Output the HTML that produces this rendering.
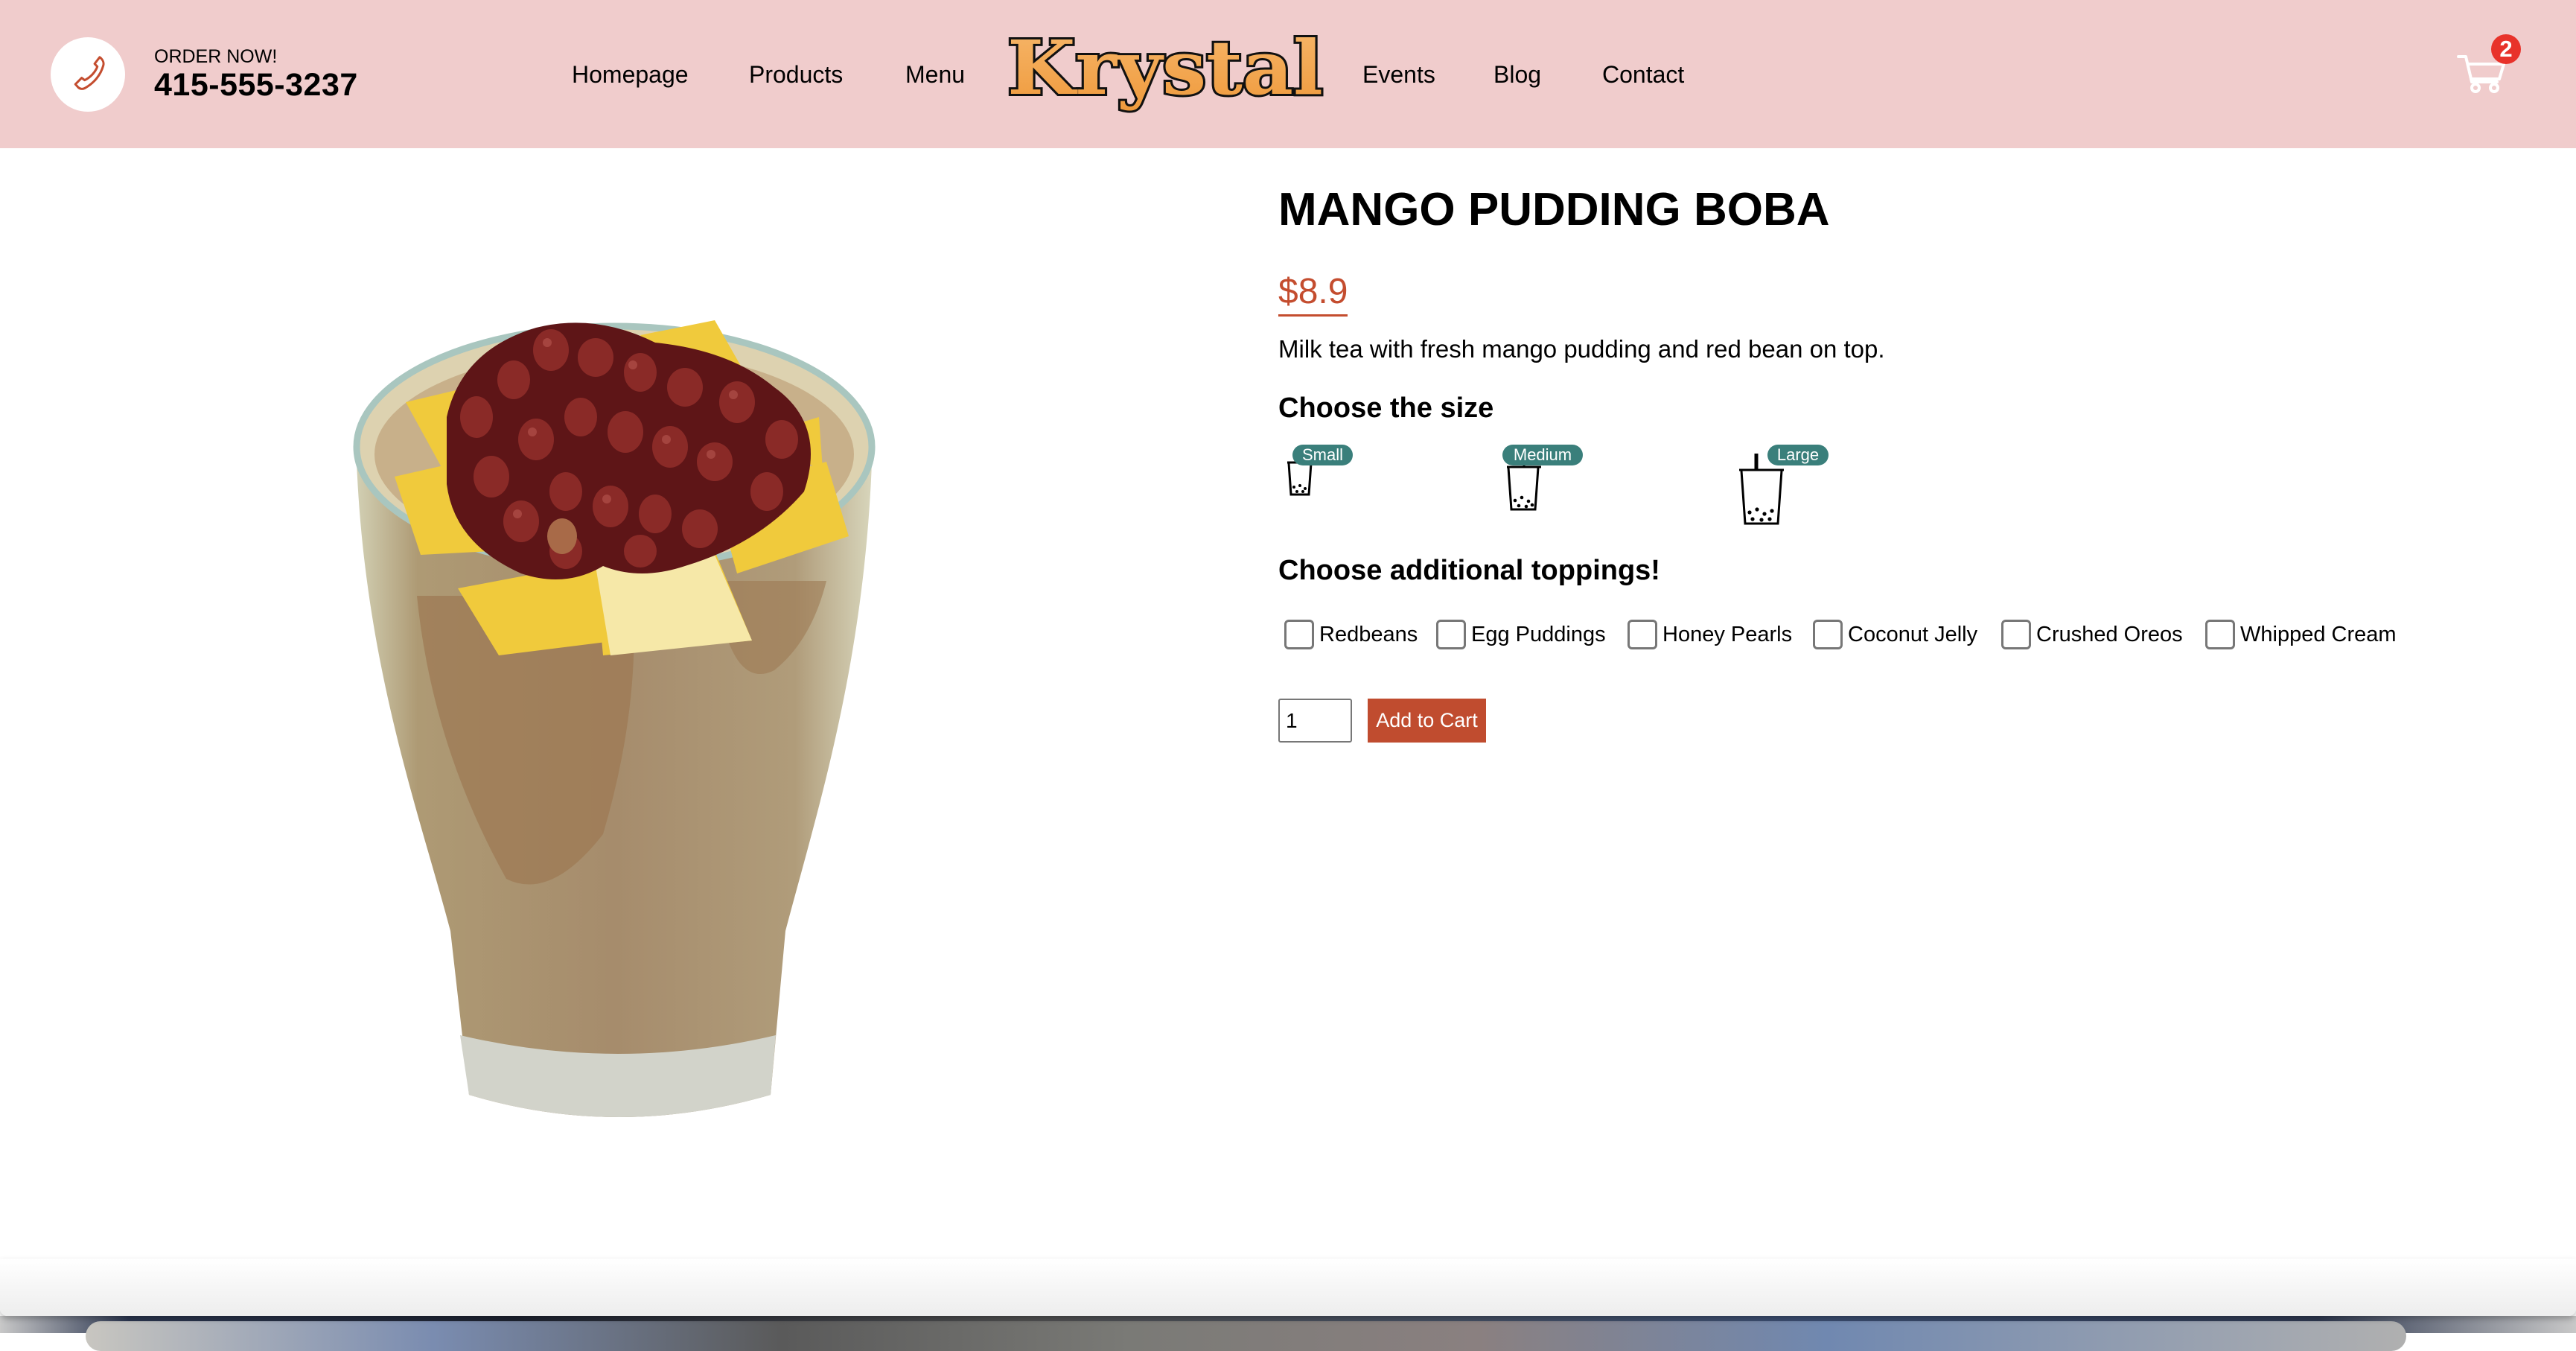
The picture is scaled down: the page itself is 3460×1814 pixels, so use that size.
<!DOCTYPE html>
<html><head><meta charset="utf-8">
<style>
*{margin:0;padding:0;box-sizing:border-box}
html,body{width:3460px;height:1790px;overflow:hidden;background:#fff;font-family:"Liberation Sans",Arial,sans-serif;color:#000}
.abs{position:absolute}
header{position:absolute;left:0;top:0;width:3460px;height:199px;background:#f0cccc}
.nav{position:absolute;top:80px;font-size:32px;line-height:40px}
.tp{position:absolute;top:832px;height:40px;display:flex;align-items:center}
.cb{width:40px;height:40px;border:3px solid #777;border-radius:6px;background:#fff;margin-right:7px}
.tp span{font-size:29px}
.pill{position:absolute;top:597px;height:28px;background:#3a7f7b;color:#fff;border-radius:14px;font-size:22px;line-height:28px;text-align:center}
</style></head><body>
<header>
<div class="abs" style="left:68px;top:50px;width:100px;height:100px;border-radius:50%;background:#fff"></div>
<svg class="abs" style="left:85px;top:68px" width="66" height="66" viewBox="0 0 24 24"><path d="M16.5 2.5l-2 3.5 1.5 1.2c-.6 2.8-2.6 5.7-5.2 7.4l-1.6-.9-2.6 3.5 1.4 1.2c1 .9 2.4.8 3.5 0 4-3 6.7-7.4 7.3-12.1.2-1.3-.5-2.6-1.6-3.4z" fill="none" stroke="#c44d2f" stroke-width="1.1" stroke-linejoin="round" transform="rotate(8 12 12)"/></svg>
<div class="abs" style="left:207px;top:62px;font-size:25px;line-height:28px">ORDER NOW!</div>
<div class="abs" style="left:207px;top:91px;font-size:43px;font-weight:bold;line-height:46px;letter-spacing:0.5px">415-555-3237</div>
<div class="nav" style="left:768px">Homepage</div>
<div class="nav" style="left:1006px">Products</div>
<div class="nav" style="left:1216px">Menu</div>
<div class="nav" style="left:1830px">Events</div>
<div class="nav" style="left:2006px">Blog</div>
<div class="nav" style="left:2152px">Contact</div>
<svg class="abs" style="left:1345px;top:30px" width="440" height="135" viewBox="0 0 440 135">
<defs><linearGradient id="lg" x1="0" y1="0" x2="0" y2="1"><stop offset="0" stop-color="#f6b66a"/><stop offset="1" stop-color="#ef9a3c"/></linearGradient></defs>
<text x="8" y="96" font-family="DejaVu Serif,serif" font-weight="bold" font-size="100" fill="url(#lg)" stroke="#111" stroke-width="6" paint-order="stroke" textLength="424" lengthAdjust="spacingAndGlyphs">Krystal</text>
</svg>
<svg class="abs" style="left:3300px;top:64px" width="70" height="62" viewBox="0 0 70 62"><path d="M2 12h10l8 34h34M15 22h48l-6 20H19" fill="none" stroke="#fff" stroke-width="4" stroke-linecap="round" stroke-linejoin="round"/><circle cx="25" cy="54" r="5" fill="none" stroke="#fff" stroke-width="4"/><circle cx="50" cy="54" r="5" fill="none" stroke="#fff" stroke-width="4"/></svg>
<div class="abs" style="left:3346px;top:46px;width:40px;height:40px;border-radius:50%;background:#e8322a;color:#fff;font-weight:bold;font-size:31px;line-height:40px;text-align:center">2</div>
</header>

<svg class="abs" style="left:0;top:199px" width="1400" height="1400" viewBox="0 199 1400 1400">
<defs>
<linearGradient id="body" x1="0" x2="1"><stop offset="0" stop-color="#d2d0b4"/><stop offset=".12" stop-color="#ae9a74"/><stop offset=".5" stop-color="#a68c6c"/><stop offset=".85" stop-color="#b09c7a"/><stop offset="1" stop-color="#d8d6bc"/></linearGradient>
</defs>
<path d="M478 590 C485 880 560 1080 605 1250 L630 1470 Q830 1530 1035 1470 L1055 1250 C1100 1080 1165 880 1172 590 Z" fill="url(#body)"/>
<path d="M560 800 Q580 1000 680 1180 Q740 1210 810 1120 Q860 950 850 800 Z" fill="#9d7a54" opacity=".75"/>
<path d="M960 780 Q980 930 1040 900 Q1090 860 1110 780 Z" fill="#9d7a54" opacity=".6"/>
<path d="M618 1390 Q830 1440 1042 1390 L1035 1470 Q830 1530 630 1470 Z" fill="#d2d3ca"/>
<ellipse cx="825" cy="600" rx="346" ry="162" fill="#ddd2b0" stroke="#a9c6bf" stroke-width="9"/>
<ellipse cx="825" cy="610" rx="322" ry="140" fill="#c8b08a"/>
<path d="M545 540 L650 515 L690 600 L600 640 Z M530 640 L640 615 L660 740 L565 745 Z M615 790 L800 755 L830 860 L670 880 Z M800 770 L960 740 L1010 860 L810 880 Z M960 660 L1110 620 L1140 720 L990 770 Z M1000 590 L1100 560 L1105 630 Z M860 450 L960 430 L1000 500 L890 510 Z" fill="#f0ca3c"/>
<path d="M800 760 L960 745 L1010 860 L820 880 Z" fill="#f6e8a8"/>
<path d="M600 560 Q620 470 720 440 Q800 420 880 460 Q980 470 1040 520 Q1110 570 1080 660 Q1020 730 920 760 Q860 780 810 760 Q760 790 700 770 Q610 730 600 650 Z" fill="#5e1517"/>
<g fill="#8a2a27">
<ellipse cx="640" cy="560" rx="22" ry="28"/><ellipse cx="690" cy="510" rx="22" ry="26"/><ellipse cx="740" cy="470" rx="24" ry="28"/><ellipse cx="800" cy="480" rx="24" ry="26"/><ellipse cx="860" cy="500" rx="22" ry="26"/><ellipse cx="920" cy="520" rx="24" ry="26"/><ellipse cx="990" cy="540" rx="24" ry="28"/><ellipse cx="1050" cy="590" rx="22" ry="26"/>
<ellipse cx="660" cy="640" rx="24" ry="28"/><ellipse cx="720" cy="590" rx="24" ry="28"/><ellipse cx="780" cy="560" rx="22" ry="26"/><ellipse cx="840" cy="580" rx="24" ry="28"/><ellipse cx="900" cy="600" rx="24" ry="28"/><ellipse cx="960" cy="620" rx="24" ry="26"/><ellipse cx="1030" cy="660" rx="22" ry="26"/>
<ellipse cx="700" cy="700" rx="24" ry="28"/><ellipse cx="760" cy="660" rx="22" ry="26"/><ellipse cx="820" cy="680" rx="24" ry="28"/><ellipse cx="880" cy="690" rx="22" ry="26"/><ellipse cx="940" cy="710" rx="24" ry="26"/><ellipse cx="760" cy="740" rx="22" ry="24"/><ellipse cx="860" cy="740" rx="22" ry="22"/></g>
<g fill="#b0504a" opacity=".7"><circle cx="735" cy="460" r="6"/><circle cx="850" cy="490" r="6"/><circle cx="985" cy="530" r="6"/><circle cx="715" cy="580" r="6"/><circle cx="895" cy="590" r="6"/><circle cx="815" cy="670" r="6"/><circle cx="695" cy="690" r="6"/><circle cx="955" cy="610" r="6"/></g>
<ellipse cx="755" cy="720" rx="20" ry="24" fill="#a86a48"/>
</svg>

<div class="abs" style="left:1717px;top:244px;font-size:62px;font-weight:bold;line-height:76px">MANGO PUDDING BOBA</div>
<div class="abs" style="left:1717px;top:364px;font-size:48px;line-height:56px;color:#c44d2f;border-bottom:3px solid #c44d2f;padding-bottom:2px">$8.9</div>
<div class="abs" style="left:1717px;top:449px;font-size:33px;line-height:40px">Milk tea with fresh mango pudding and red bean on top.</div>
<div class="abs" style="left:1717px;top:525px;font-size:38px;font-weight:bold;line-height:46px">Choose the size</div>

<svg class="abs" style="left:1720px;top:600px" width="700" height="110" viewBox="1720 600 700 110" fill="none" stroke="#000" stroke-width="3">
<path d="M1729 621h34M1731 622l3 42h24l3-42"/>
<path d="M2024 627h46M2026 628l4 56h32l4-56M2047 620v8"/>
<path d="M2336 631h60M2339 632l5 71h44l5-71"/>
<path d="M2359 609v22" stroke-width="5"/>
<g fill="#000" stroke="none"><circle cx="1738" cy="654" r="2"/><circle cx="1746" cy="652" r="2"/><circle cx="1753" cy="656" r="2"/><circle cx="1742" cy="660" r="2"/><circle cx="1750" cy="660" r="2"/>
<circle cx="2035" cy="672" r="2.3"/><circle cx="2044" cy="668" r="2.3"/><circle cx="2053" cy="673" r="2.3"/><circle cx="2040" cy="679" r="2.3"/><circle cx="2050" cy="680" r="2.3"/><circle cx="2058" cy="678" r="2.3"/>
<circle cx="2350" cy="688" r="2.6"/><circle cx="2360" cy="684" r="2.6"/><circle cx="2370" cy="690" r="2.6"/><circle cx="2380" cy="686" r="2.6"/><circle cx="2354" cy="697" r="2.6"/><circle cx="2366" cy="698" r="2.6"/><circle cx="2377" cy="697" r="2.6"/></g>
</svg>
<div class="pill" style="left:1736px;width:81px">Small</div>
<div class="pill" style="left:2018px;width:108px">Medium</div>
<div class="pill" style="left:2374px;width:82px">Large</div>

<div class="abs" style="left:1717px;top:743px;font-size:38px;font-weight:bold;line-height:46px">Choose additional toppings!</div>
<div class="tp" style="left:1725px"><div class="cb"></div><span>Redbeans</span></div>
<div class="tp" style="left:1929px"><div class="cb"></div><span>Egg Puddings</span></div>
<div class="tp" style="left:2186px"><div class="cb"></div><span>Honey Pearls</span></div>
<div class="tp" style="left:2435px"><div class="cb"></div><span>Coconut Jelly</span></div>
<div class="tp" style="left:2688px"><div class="cb"></div><span>Crushed Oreos</span></div>
<div class="tp" style="left:2962px"><div class="cb"></div><span>Whipped Cream</span></div>

<div class="abs" style="left:1717px;top:938px;width:99px;height:59px;border:2px solid #777;border-radius:3px;font-size:28px;line-height:55px;padding-left:8px">1</div>
<div class="abs" style="left:1837px;top:938px;width:159px;height:59px;background:#c04c2f;color:#fff;font-size:27px;line-height:59px;text-align:center">Add to Cart</div>

<div class="abs" style="left:0;top:1767px;width:3460px;height:23px;background:linear-gradient(90deg,#c8c8c8,#2b3650 5%,#1d2230 20%,#505050 40%,#3b4e72 70%,#2e3850 90%,#c8c8c8)"></div>
<div class="abs" style="left:115px;top:1774px;width:3117px;height:40px;border-radius:20px;background:linear-gradient(90deg,#c8c6c0,#7a8cb0 15%,#5a5a5a 30%,#7a7a76 45%,#8a8080 60%,#7088b0 75%,#b0b0b0)"></div>
<div class="abs" style="left:0;top:1690px;width:3460px;height:77px;background:linear-gradient(#fff,#ededed);border-radius:0 0 10px 10px;box-shadow:0 4px 8px rgba(0,0,0,.25)"></div>
</body></html>
